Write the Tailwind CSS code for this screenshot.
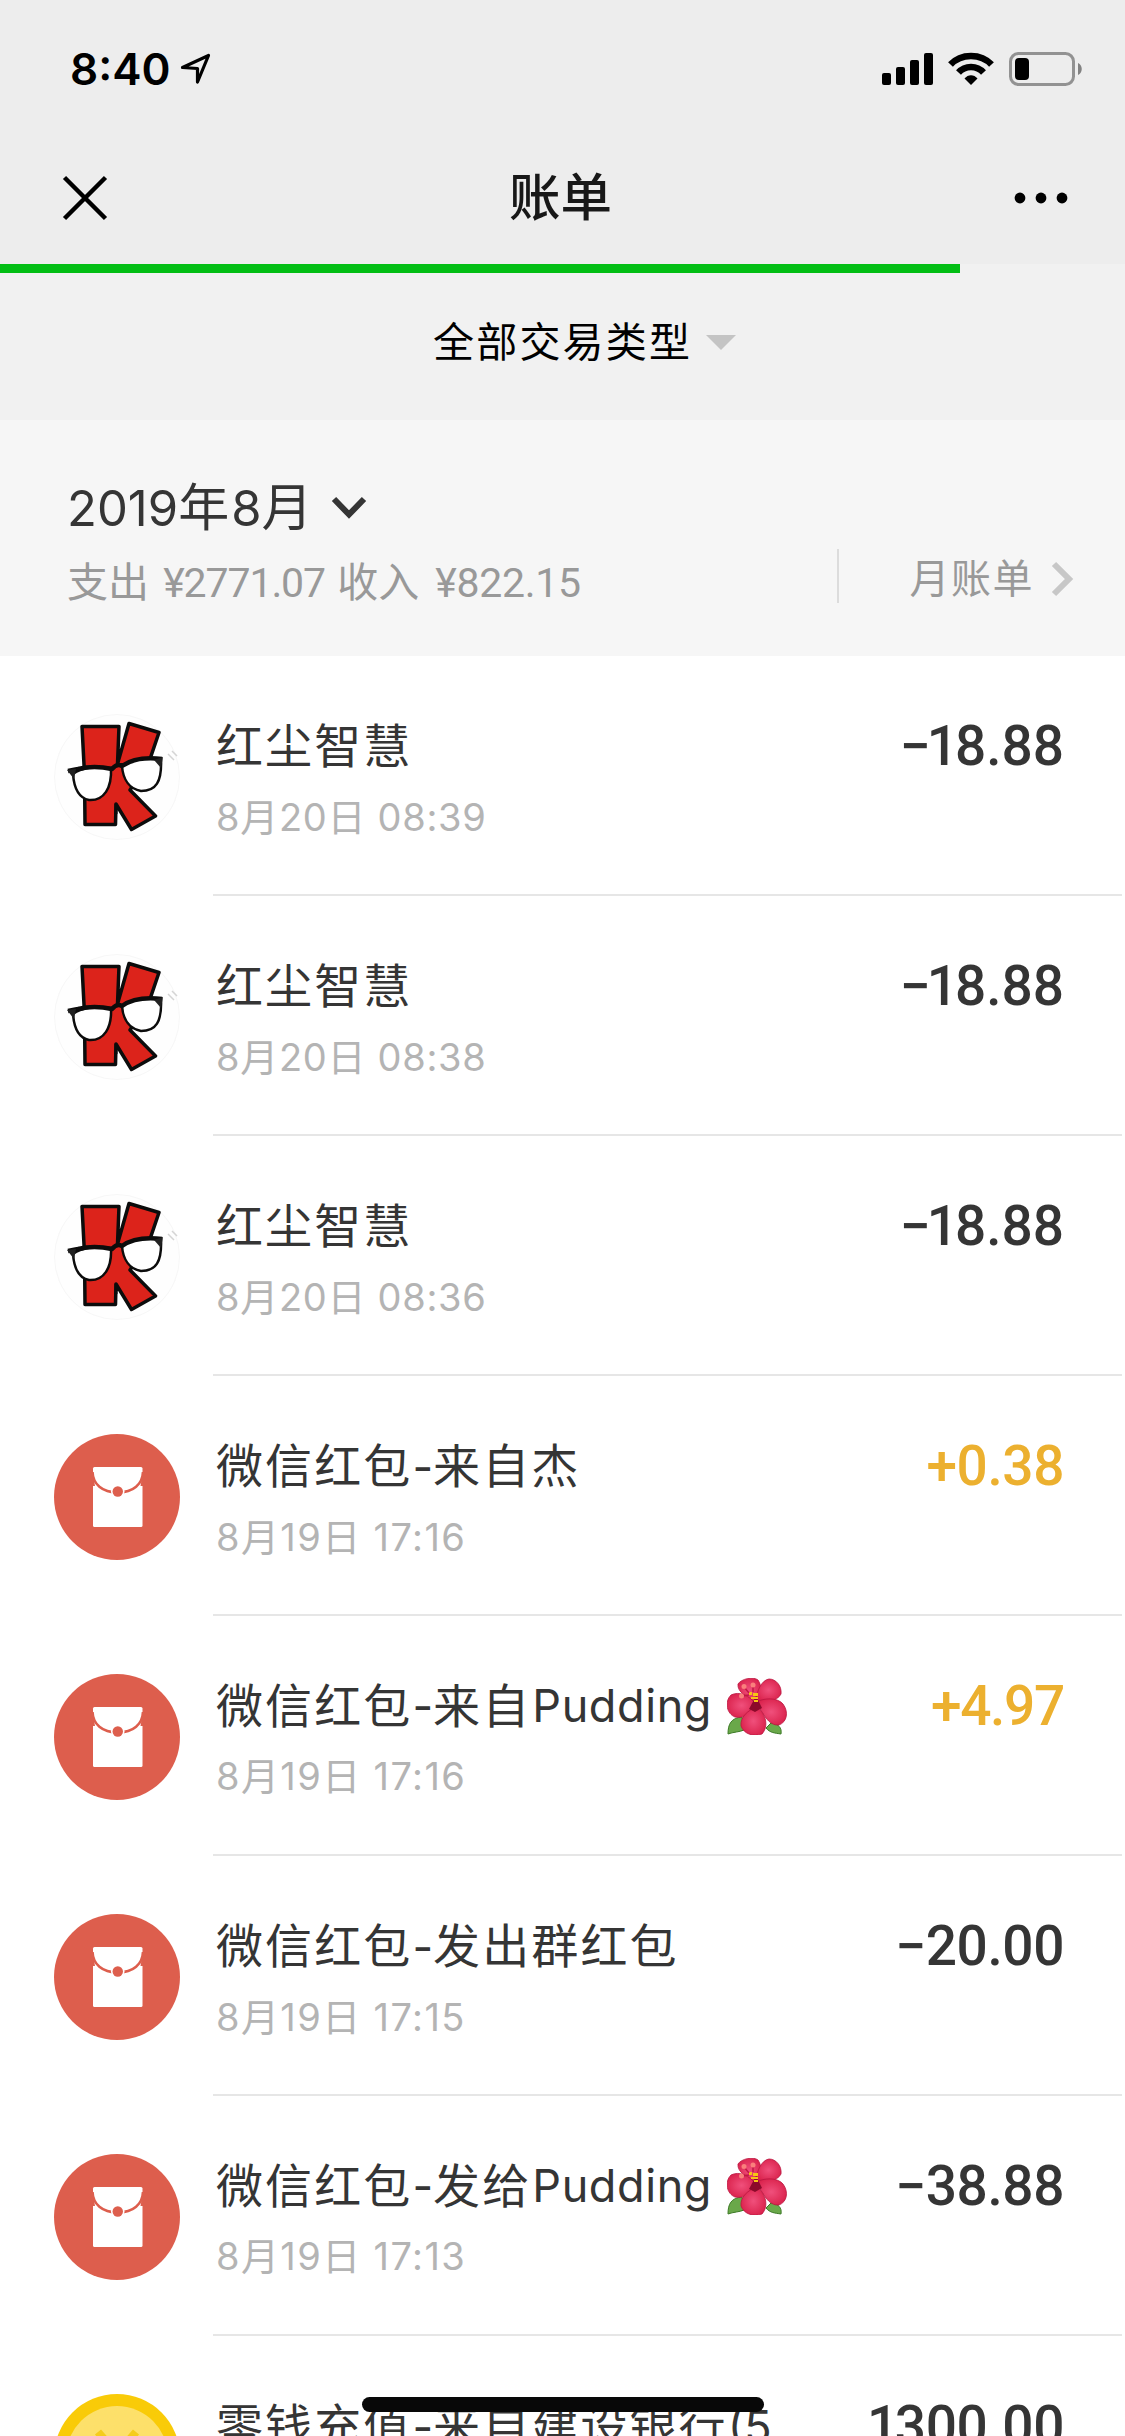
<!DOCTYPE html>
<html lang="zh-CN">
<head>
<meta charset="utf-8">
<title>账单</title>
<script src="https://cdn.jsdelivr.net/npm/@tailwindcss/browser@4"></script>
</head>
<body class="h-[2436px] w-[1125px] overflow-hidden bg-white font-['Inter','Noto_Sans_CJK_SC',sans-serif] text-[#353535]">

<svg class="absolute h-0 w-0">
  <defs>
    <radialGradient id="petal" cx="50%" cy="50%" r="60%"><stop offset="0" stop-color="#f0507c"/><stop offset="1" stop-color="#d81e48"/></radialGradient>
  </defs>
  <symbol id="avatar-k" viewBox="0 0 126 126">
    <circle cx="63" cy="63" r="62.5" fill="#fefefe" stroke="#f7f7f7"/>
    <g stroke="#0c0c0c" stroke-linejoin="round">
      <path d="M28 12.500L65 12.500L63.500 50L75 9.500L105 18.500L95 48L76 76L101.500 102L77.500 115.500L62 90L61.500 110.500L31 110.500L30.500 60Z" fill="#dc231b" stroke-width="3.500"/>
      <path d="M22 58C34 52 46 53 57 54C58 74 50 87 35 86C25 84 20 74 19 60Z" fill="#fff" stroke-width="2.500"/>
      <path d="M68 52C79 44 92 43 107 45C108 68 102 77 87 77C76 75 69 66 68 52Z" fill="#fff" stroke-width="2.500"/>
      <path d="M14 57L24 55Q40 51 58 55Q63 49 68 52Q82 42 108 45" fill="none" stroke-width="4.500"/>
      <path d="M62 90L62 100" fill="none" stroke-width="3"/>
    </g>
    <path d="M13 56L22 55L20 65Z M109 43L107 54L100 46Z" fill="#222"/>
    <path d="M114 40L120 46M118 37L123 42" stroke="#d5d5d5" stroke-width="1.500"/>
  </symbol>
  <symbol id="red-packet" viewBox="0 0 126 126">
    <circle cx="63" cy="63" r="63" fill="#dd5e4d"/>
    <path d="M40.500 33H87Q88.500 33 88.500 34.500V91.500Q88.500 93 87 93H40.500Q39 93 39 91.500V34.500Q39 33 40.500 33Z" fill="#fff"/>
    <path d="M38.500 37C39 49 48 57.500 63.750 57.500S88.500 49 89 37" transform="translate(0 1)" fill="none" stroke="#dd5e4d" stroke-width="2.600"/>
    <path d="M37 40H39L41 52H37ZM88.500 40H91V52H86.500Z" fill="#dd5e4d"/>
    <circle cx="63.750" cy="57.500" r="6.800" fill="#fff"/>
    <circle cx="63.750" cy="57.500" r="5.200" fill="#dd5e4d"/>
  </symbol>
  <symbol id="coin" viewBox="0 0 126 126">
    <circle cx="63" cy="63" r="63" fill="#f9cb08"/>
    <circle cx="63" cy="63" r="51" fill="#fde06a"/>
    <path d="M44 38L63 60L82 38M63 60V92M46 62H80M46 75H80" fill="none" stroke="#f5cc1d" stroke-width="8"/>
  </symbol>
  <symbol id="hibiscus" viewBox="0 0 60 57">
    <path d="M1 56C1 46 4 40 15 39L17 52C13 54 6 54 1 56Z" fill="#6aa84a" stroke="#3c7a26"/>
    <path d="M54 56C55 50 52 46 44 45L39 50C43 55 48 55 54 56Z" fill="#6aa84a" stroke="#3c7a26"/>
    <g fill="url(#petal)" stroke="#ba1540" stroke-width=".8">
      <path d="M31 25C20 20 10 14 11 6C14 1 26 -2 31 2C36 9 33 17 31 25Z"/>
      <path d="M29 22C30 12 35 2 42 1C49 1 55 8 54 16C50 24 38 24 29 22Z"/>
      <path d="M29 24C37 20 50 19 56 26C62 34 60 44 52 47C41 48 36 35 29 24Z"/>
      <path d="M29 27C23 17 12 13 4 17C-3 24 0 36 8 39C18 41 25 34 29 27Z"/>
      <path d="M30 29C21 32 13 39 14 48C17 56 26 59 35 56C42 48 39 36 30 29Z"/>
    </g>
    <path d="M22 31L29 18L35 30L28 34Z" fill="#8c0a2b"/>
    <path d="M22 14h3v3h-3zM26 15h5v3h-5zM24 19h7v2h-7zM27 22h4v2h-4z" fill="#f6c416"/>
    <path d="M17 9L22 15M26 8L26 14M15 18L22 17" stroke="#c01945" stroke-width="1.500"/>
    <circle cx="17" cy="8.500" r="2.500" fill="#fa7f7c"/><circle cx="26" cy="7" r="2.500" fill="#fa7f7c"/><circle cx="14.500" cy="18" r="2.500" fill="#fa7f7c"/>
  </symbol>
</svg>

<header class="h-[264px] bg-[#ededed] text-black">
  <div class="flex h-[138px] items-center pl-[70px] pr-[43px]">
    <span class="text-[44px] font-semibold leading-none">8:40</span>
    <svg class="ml-[9px] h-8 w-8" viewBox="0 0 32 32"><path d="M2.500 14.500L28.500 2.500L17.500 29V15.500Z" fill="none" stroke="#000" stroke-width="3.200" stroke-linejoin="round"/></svg>
    <svg class="ml-auto h-[34px] w-[200px]" viewBox="882 52 200 34">
      <rect x="882" y="73" width="9" height="12" rx="2"/><rect x="896" y="67" width="9" height="18" rx="2"/><rect x="910" y="60" width="9" height="25" rx="2"/><rect x="924" y="53" width="9" height="32" rx="2"/>
      <path d="M950.500 64.500C961 53 981 53 991.500 64.500" fill="none" stroke="#000" stroke-width="6.500"/>
      <path d="M958.500 72.500C965 65 977 65 983.500 72.500" fill="none" stroke="#000" stroke-width="6.500"/>
      <path d="M964.500 78.500C968 74 974 74 977.500 78.500L971 85Z"/>
      <rect x="1010.500" y="53.500" width="63" height="31" rx="8" fill="none" stroke="#929292" stroke-width="3"/>
      <rect x="1015" y="58" width="14" height="22" rx="4"/>
      <path d="M1078 63C1083 65 1083 73 1078 75Z" fill="#828282"/>
    </svg>
  </div>
  <div class="flex h-[120px] items-center justify-between pl-[62px] pr-[56px]">
    <svg class="h-[46px] w-[46px]" viewBox="0 0 46 46"><path d="M2.500 2.500L43.500 43.500M43.500 2.500L2.500 43.500" stroke="#000" stroke-width="4.500"/></svg>
    <h1 class="text-[51.500px] font-medium leading-none text-[#181818]">账单</h1>
    <svg class="h-3 w-[56px]" viewBox="0 0 56 12"><circle cx="7" cy="6" r="5.400"/><circle cx="28" cy="6" r="5.400"/><circle cx="49" cy="6" r="5.400"/></svg>
  </div>
</header>

<div class="h-[156px] bg-[#f1f1f1] text-black">
  <div class="h-[9px] w-[960px] bg-[#02be14]"></div>
  <div class="flex h-[138px] items-center pl-[433px]">
    <span class="text-[41px] leading-none tracking-[2.2px]">全部交易类型</span>
    <svg class="ml-[14px] h-[15px] w-[30px]" viewBox="0 0 30 15"><path d="M0 0H30L15 15Z" fill="#c4c4c4"/></svg>
  </div>
</div>

<section class="flex h-[236px] justify-between bg-[#f6f6f6] pl-[67px] pr-[50px]">
  <div class="pt-[56px]">
    <div class="flex h-[64px] items-center">
      <span class="text-[49px] leading-16">2019<span class="text-[51px] tracking-[2px]">年</span>8<span class="text-[51px] tracking-[2px]">月</span></span>
      <svg class="ml-[17px] h-6 w-[36px]" viewBox="0 0 36 24"><path d="M3 3L18 18.500L33 3" fill="none" stroke="#353535" stroke-width="6"/></svg>
    </div>
    <div class="mt-[19px] whitespace-pre font-['Roboto','Noto_Sans_CJK_SC',sans-serif] text-[41px] leading-12 text-[#999]">支出 <span class="ml-1 tracking-[-1.1px]">¥2771.07</span> <span class="ml-0.5">收入</span> <span class="ml-1.5 tracking-[-0.3px]">¥822.15</span></div>
  </div>
  <div class="mt-[129px] flex h-[54px] items-center border-l-2 border-[#dcdcdc] pl-[71px] pt-[6px] text-[#999]">
    <span class="text-[40px] leading-none tracking-[1.5px]">月账单</span>
    <svg class="ml-[17px] h-9 w-6" viewBox="0 0 24 36"><path d="M3 3L18 18L3 33" fill="none" stroke="#c7c7c7" stroke-width="6"/></svg>
  </div>
</section>

<main>
  <article class="flex h-60 pl-[54px]">
    <svg class="mt-[58px] h-[126px] w-[126px]"><use href="#avatar-k"/></svg>
    <div class="ml-[33px] mr-[3px] flex flex-1 justify-between border-b-2 border-[#e6e6e6] pl-[3px] pr-[58px] pt-[58px]">
      <div>
        <div class="text-[45px] leading-16"><span class="text-[47px] tracking-[2.1px]">红尘智慧</span></div>
        <div class="mt-[14px] whitespace-pre text-[38px] leading-12 tracking-[0.7px] text-[#b4b4b4]">8月20日 08:39</div>
      </div>
      <div class="font-['Roboto'] text-[55px] font-medium leading-16">−<span class="-ml-1 -mr-[3px]">1</span>8.88</div>
    </div>
  </article>
  <article class="flex h-60 pl-[54px]">
    <svg class="mt-[58px] h-[126px] w-[126px]"><use href="#avatar-k"/></svg>
    <div class="ml-[33px] mr-[3px] flex flex-1 justify-between border-b-2 border-[#e6e6e6] pl-[3px] pr-[58px] pt-[58px]">
      <div>
        <div class="text-[45px] leading-16"><span class="text-[47px] tracking-[2.1px]">红尘智慧</span></div>
        <div class="mt-[14px] whitespace-pre text-[38px] leading-12 tracking-[0.7px] text-[#b4b4b4]">8月20日 08:38</div>
      </div>
      <div class="font-['Roboto'] text-[55px] font-medium leading-16">−<span class="-ml-1 -mr-[3px]">1</span>8.88</div>
    </div>
  </article>
  <article class="flex h-60 pl-[54px]">
    <svg class="mt-[58px] h-[126px] w-[126px]"><use href="#avatar-k"/></svg>
    <div class="ml-[33px] mr-[3px] flex flex-1 justify-between border-b-2 border-[#e6e6e6] pl-[3px] pr-[58px] pt-[58px]">
      <div>
        <div class="text-[45px] leading-16"><span class="text-[47px] tracking-[2.1px]">红尘智慧</span></div>
        <div class="mt-[14px] whitespace-pre text-[38px] leading-12 tracking-[0.7px] text-[#b4b4b4]">8月20日 08:36</div>
      </div>
      <div class="font-['Roboto'] text-[55px] font-medium leading-16">−<span class="-ml-1 -mr-[3px]">1</span>8.88</div>
    </div>
  </article>
  <article class="flex h-60 pl-[54px]">
    <svg class="mt-[58px] h-[126px] w-[126px]"><use href="#red-packet"/></svg>
    <div class="ml-[33px] mr-[3px] flex flex-1 justify-between border-b-2 border-[#e6e6e6] pl-[3px] pr-[58px] pt-[58px]">
      <div>
        <div class="text-[45px] leading-16"><span class="text-[47px] tracking-[2.1px]">微信红包</span>-<span class="text-[47px] tracking-[2.1px]">来自杰</span></div>
        <div class="mt-[14px] whitespace-pre text-[38px] leading-12 tracking-[1.4px] text-[#b4b4b4]">8月19日 17:16</div>
      </div>
      <div class="font-['Roboto'] text-[55px] font-medium leading-16 tracking-[-0.4px] text-[#ecb02f]">+0.38</div>
    </div>
  </article>
  <article class="flex h-60 pl-[54px]">
    <svg class="mt-[58px] h-[126px] w-[126px]"><use href="#red-packet"/></svg>
    <div class="ml-[33px] mr-[3px] flex flex-1 justify-between border-b-2 border-[#e6e6e6] pl-[3px] pr-[58px] pt-[58px]">
      <div>
        <div class="flex items-center text-[45px] leading-16"><span class="text-[47px] tracking-[2.1px]">微信红包</span>-<span class="text-[47px] tracking-[2.1px]">来自</span><span class="ml-px tracking-[0.6px]">Pudding</span><svg class="ml-[15px] h-[57px] w-[60px]"><use href="#hibiscus"/></svg></div>
        <div class="mt-[14px] whitespace-pre text-[38px] leading-12 tracking-[1.4px] text-[#b4b4b4]">8月19日 17:16</div>
      </div>
      <div class="font-['Roboto'] text-[55px] font-medium leading-16 tracking-[-1.3px] text-[#ecb02f]">+4.97</div>
    </div>
  </article>
  <article class="flex h-60 pl-[54px]">
    <svg class="mt-[58px] h-[126px] w-[126px]"><use href="#red-packet"/></svg>
    <div class="ml-[33px] mr-[3px] flex flex-1 justify-between border-b-2 border-[#e6e6e6] pl-[3px] pr-[58px] pt-[58px]">
      <div>
        <div class="text-[45px] leading-16"><span class="text-[47px] tracking-[2.1px]">微信红包</span>-<span class="text-[47px] tracking-[2.1px]">发出群红包</span></div>
        <div class="mt-[14px] whitespace-pre text-[38px] leading-12 tracking-[1.4px] text-[#b4b4b4]">8月19日 17:15</div>
      </div>
      <div class="font-['Roboto'] text-[55px] font-medium leading-16 tracking-[-0.4px]">−20.00</div>
    </div>
  </article>
  <article class="flex h-60 pl-[54px]">
    <svg class="mt-[58px] h-[126px] w-[126px]"><use href="#red-packet"/></svg>
    <div class="ml-[33px] mr-[3px] flex flex-1 justify-between border-b-2 border-[#e6e6e6] pl-[3px] pr-[58px] pt-[58px]">
      <div>
        <div class="flex items-center text-[45px] leading-16"><span class="text-[47px] tracking-[2.1px]">微信红包</span>-<span class="text-[47px] tracking-[2.1px]">发给</span><span class="ml-px tracking-[0.6px]">Pudding</span><svg class="ml-[15px] h-[57px] w-[60px]"><use href="#hibiscus"/></svg></div>
        <div class="mt-[14px] whitespace-pre text-[38px] leading-12 tracking-[1.4px] text-[#b4b4b4]">8月19日 17:13</div>
      </div>
      <div class="font-['Roboto'] text-[55px] font-medium leading-16 tracking-[-0.4px]">−38.88</div>
    </div>
  </article>
  <article class="flex h-[100px] overflow-hidden pl-[54px]">
    <svg class="mt-[58px] h-[126px] w-[126px] shrink-0"><use href="#coin"/></svg>
    <div class="ml-[33px] mr-[3px] flex flex-1 justify-between pl-[3px] pr-[58px] pt-[58px]">
      <div class="text-[45px] leading-16"><span class="text-[47px] tracking-[2.1px]">零钱充值</span>-<span class="text-[47px] tracking-[2.1px]">来自建设银行</span>(5</div>
      <div class="font-['Roboto'] text-[55px] font-medium leading-16 tracking-[-0.4px]"><span class="-mr-[3px]">1</span>300.00</div>
    </div>
  </article>
</main>

<div class="absolute left-[362px] top-[2397px] h-[15px] w-[402px] rounded-full bg-[#080808]"></div>
</body>
</html>
